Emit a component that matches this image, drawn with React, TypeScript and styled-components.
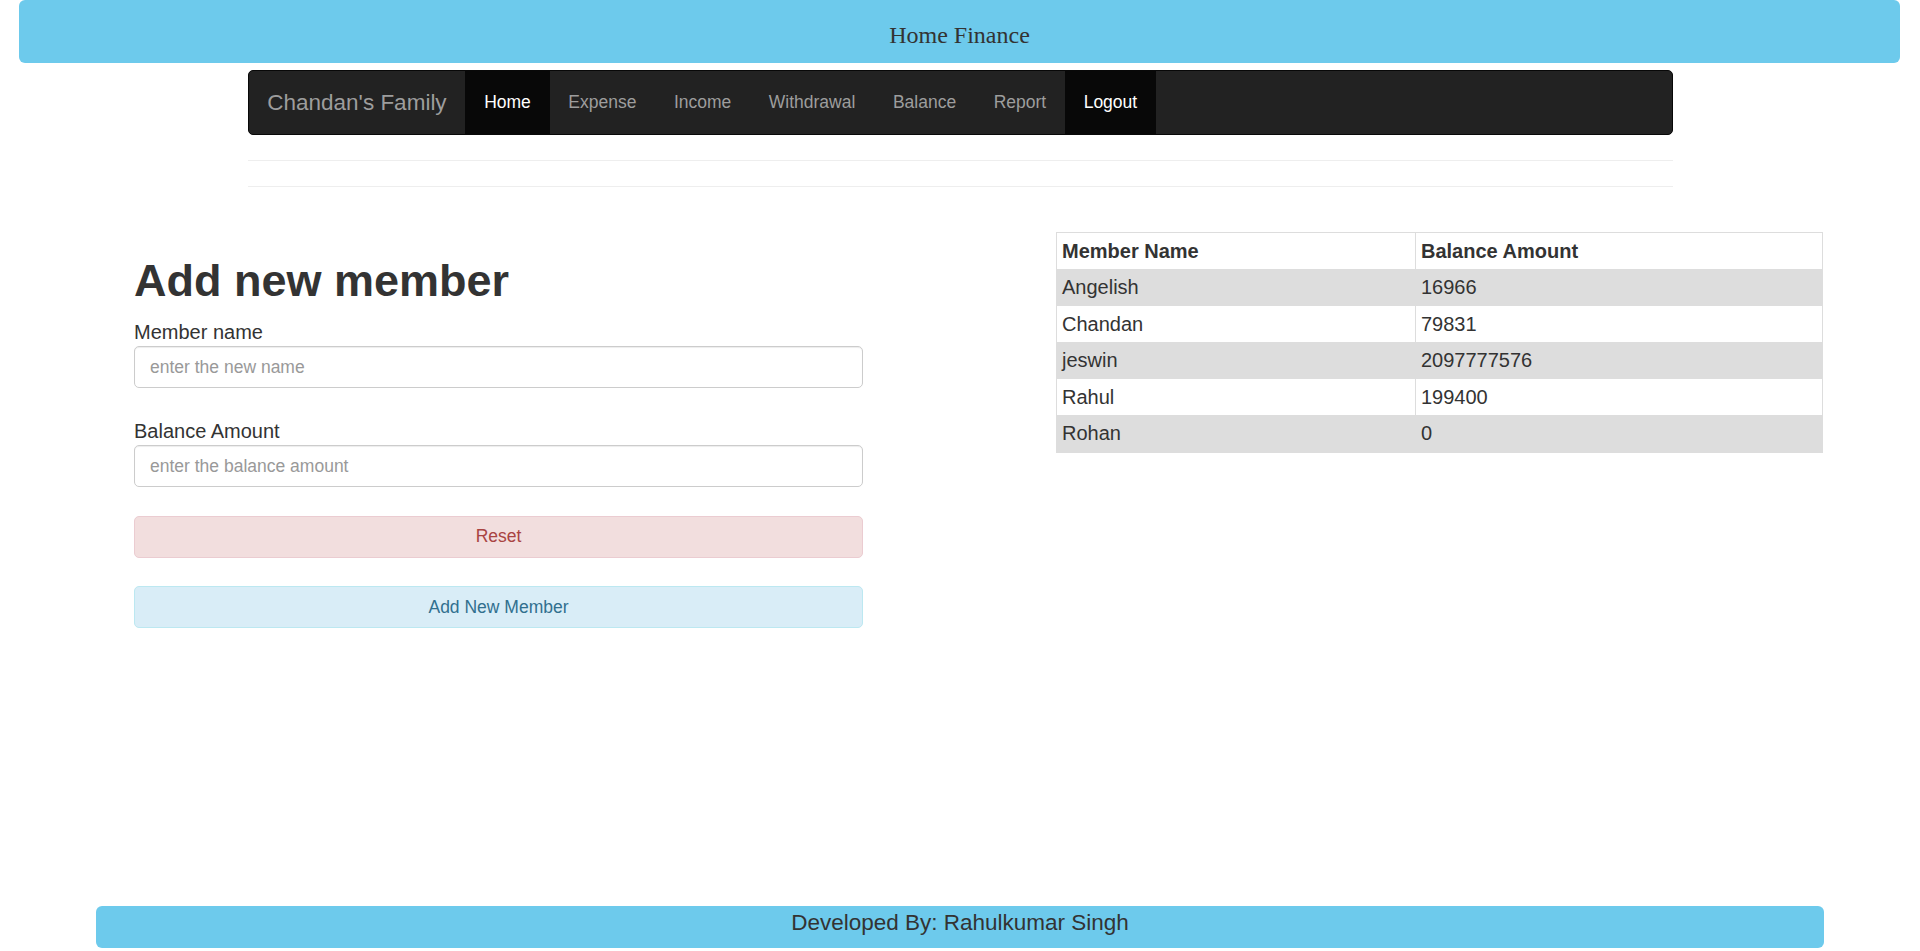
import React from 'react'
import styled, { createGlobalStyle } from 'styled-components'

const GlobalStyle = createGlobalStyle`
  html, body {
    margin: 0;
    padding: 0;
    background: #fff;
  }
  body {
    font-family: 'Liberation Sans', Arial, Helvetica, sans-serif;
    font-size: 17.5px;
    line-height: 1.42857;
    color: #333;
  }
  * {
    box-sizing: border-box;
  }
`

const members = [
  { name: 'Angelish', balance: '16966' },
  { name: 'Chandan', balance: '79831' },
  { name: 'jeswin', balance: '2097777576' },
  { name: 'Rahul', balance: '199400' },
  { name: 'Rohan', balance: '0' },
]

const navLinks = ['Home', 'Expense', 'Income', 'Withdrawal', 'Balance', 'Report']

const App: React.FC = () => {
  return (
    <Page>
      <GlobalStyle />
      <Banner>Home Finance</Banner>

      <Container>
        <Navbar>
          <Brand href="#">Chandan's Family</Brand>
          <NavList>
            {navLinks.map(link => (
              <NavItem key={link} active={link === 'Home'}>
                <a href="#">{link}</a>
              </NavItem>
            ))}
          </NavList>
          <NavList>
            <NavItem active>
              <a href="#">Logout</a>
            </NavItem>
          </NavList>
        </Navbar>
        <Rule />
        <Rule />
      </Container>

      <Content>
        <FormColumn>
          <Heading>Add new member</Heading>
          <Label htmlFor="member-name">Member name</Label>
          <Input id="member-name" type="text" placeholder="enter the new name" />
          <Spacer />
          <Label htmlFor="balance">Balance Amount</Label>
          <Input id="balance" type="text" placeholder="enter the balance amount" />
          <Spacer />
          <Button variant="danger">Reset</Button>
          <Spacer />
          <Button variant="info">Add New Member</Button>
        </FormColumn>

        <TableColumn>
          <Table>
            <colgroup>
              <col style={{ width: 359 }} />
              <col />
            </colgroup>
            <thead>
              <tr>
                <th>Member Name</th>
                <th>Balance Amount</th>
              </tr>
            </thead>
            <tbody>
              {members.map(m => (
                <tr key={m.name}>
                  <td>{m.name}</td>
                  <td>{m.balance}</td>
                </tr>
              ))}
            </tbody>
          </Table>
        </TableColumn>
      </Content>

      <Footer>Developed By: Rahulkumar Singh</Footer>
    </Page>
  )
}

const Page = styled.div`
  display: flex;
  flex-direction: column;
  min-height: 100vh;
`

const Banner = styled.div`
  margin: 0 20px 0 19px;
  height: 63px;
  padding-top: 7px;
  line-height: 56px;
  text-align: center;
  background: #6dcaec;
  border-radius: 6px;
  font-family: 'Liberation Serif', 'Times New Roman', serif;
  font-size: 24px;
  color: #333;
`

const Container = styled.div`
  width: 1425px;
  margin: 7px auto 0;
`

const Navbar = styled.nav`
  display: flex;
  align-items: stretch;
  height: 65px;
  background: #222;
  border: 1.25px solid #080808;
  border-radius: 5px;
`

const Brand = styled.a`
  padding: 18.75px;
  font-size: 22.5px;
  line-height: 25px;
  color: #9d9d9d;
  text-decoration: none;
`

const NavList = styled.ul`
  display: flex;
  margin: 0;
  padding: 0;
  list-style: none;
`

const NavItem = styled.li<{ active?: boolean }>`
  background: ${p => (p.active ? '#080808' : 'transparent')};
  a {
    display: block;
    padding: 18.75px;
    line-height: 25px;
    font-size: 17.5px;
    color: ${p => (p.active ? '#fff' : '#9d9d9d')};
    text-decoration: none;
  }
`

const Rule = styled.hr`
  margin: 25px 0 0;
  border: 0;
  border-top: 1px solid #eee;
`

const Content = styled.div`
  display: flex;
  align-items: flex-start;
  padding: 25px 0 0 134px;
`

const FormColumn = styled.div`
  width: 729px;
  padding-top: 43.5px;
`

const Heading = styled.h1`
  margin: 0 0 12.5px;
  font-size: 45px;
  line-height: 49.5px;
  font-weight: bold;
  color: #333;
`

const Label = styled.label`
  display: block;
  font-size: 20px;
  line-height: 28.6px;
`

const Input = styled.input`
  display: block;
  width: 100%;
  height: 42px;
  padding: 7.5px 15px;
  font-family: inherit;
  font-size: 17.5px;
  color: #555;
  background: #fff;
  border: 1px solid #ccc;
  border-radius: 5px;
  box-shadow: inset 0 1px 1px rgba(0, 0, 0, 0.075);
  outline: none;
  &::placeholder {
    color: #999;
  }
`

const Spacer = styled.div`
  height: 28.5px;
`

const buttonColors = {
  danger: { bg: '#f2dede', border: '#ebccd1', color: '#a94442' },
  info: { bg: '#d9edf7', border: '#bce8f1', color: '#31708f' },
}

const Button = styled.button<{ variant: 'danger' | 'info' }>`
  display: block;
  width: 100%;
  height: 42px;
  padding: 7.5px 15px;
  font-family: inherit;
  font-size: 17.5px;
  line-height: 25px;
  color: ${p => buttonColors[p.variant].color};
  background: ${p => buttonColors[p.variant].bg};
  border: 1px solid ${p => buttonColors[p.variant].border};
  border-radius: 5px;
  cursor: pointer;
`

const TableColumn = styled.div`
  width: 767px;
  margin-left: 193px;
  padding-top: 20px;
`

const Table = styled.table`
  width: 100%;
  border-collapse: collapse;
  border: 1px solid #ddd;
  th,
  td {
    padding: 3.5px 5px;
    font-size: 20px;
    line-height: 28.6px;
    text-align: left;
    border: 1px solid #ddd;
  }
  th {
    font-weight: bold;
  }
  tbody tr:nth-child(odd) {
    background: #ddd;
  }
`

const Footer = styled.footer`
  width: 1728px;
  height: 42px;
  margin: auto auto 3px;
  padding-top: 5px;
  background: #6dcaec;
  border-radius: 6px;
  font-size: 22.5px;
  line-height: 24.75px;
  text-align: center;
  color: #333;
`

export default App
